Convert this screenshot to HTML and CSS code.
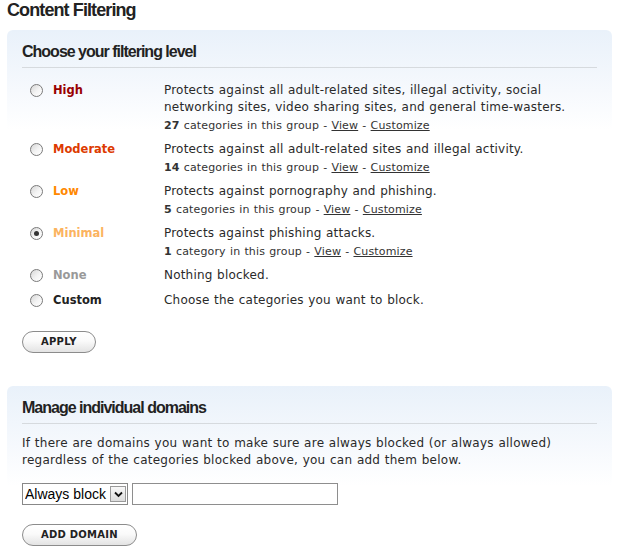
FILE: index.html
```html
<!DOCTYPE html>
<html lang="en">
<head>
<meta charset="utf-8">
<title>Content Filtering</title>
<link rel="stylesheet" href="styles.css">
</head>
<body>
<h1 class="page-title">Content Filtering</h1>

<section class="panel">
  <h2 class="panel-title">Choose your filtering level</h2>
  <ul class="levels">
    <li class="level">
      <input class="radio" type="radio" name="level" id="lv-high">
      <label class="level-name lv-high" for="lv-high">High</label>
      <div class="level-info">
        <p class="desc">Protects against all adult-related sites, illegal activity, social networking sites, video sharing sites, and general time-wasters.</p>
        <p class="meta"><b>27</b> categories in this group - <a href="#">View</a> - <a href="#">Customize</a></p>
      </div>
    </li>
    <li class="level">
      <input class="radio" type="radio" name="level" id="lv-moderate">
      <label class="level-name lv-moderate" for="lv-moderate">Moderate</label>
      <div class="level-info">
        <p class="desc">Protects against all adult-related sites and illegal activity.</p>
        <p class="meta"><b>14</b> categories in this group - <a href="#">View</a> - <a href="#">Customize</a></p>
      </div>
    </li>
    <li class="level">
      <input class="radio" type="radio" name="level" id="lv-low">
      <label class="level-name lv-low" for="lv-low">Low</label>
      <div class="level-info">
        <p class="desc">Protects against pornography and phishing.</p>
        <p class="meta"><b>5</b> categories in this group - <a href="#">View</a> - <a href="#">Customize</a></p>
      </div>
    </li>
    <li class="level">
      <input class="radio" type="radio" name="level" id="lv-minimal" checked>
      <label class="level-name lv-minimal" for="lv-minimal">Minimal</label>
      <div class="level-info">
        <p class="desc">Protects against phishing attacks.</p>
        <p class="meta"><b>1</b> category in this group - <a href="#">View</a> - <a href="#">Customize</a></p>
      </div>
    </li>
    <li class="level">
      <input class="radio" type="radio" name="level" id="lv-none">
      <label class="level-name lv-none" for="lv-none">None</label>
      <div class="level-info">
        <p class="desc">Nothing blocked.</p>
      </div>
    </li>
    <li class="level">
      <input class="radio" type="radio" name="level" id="lv-custom">
      <label class="level-name lv-custom" for="lv-custom">Custom</label>
      <div class="level-info">
        <p class="desc">Choose the categories you want to block.</p>
      </div>
    </li>
  </ul>
  <button class="pill-btn apply-btn" type="button">APPLY</button>
</section>

<section class="panel panel-domains">
  <h2 class="panel-title">Manage individual domains</h2>
  <p class="intro">If there are domains you want to make sure are always blocked (or always allowed) regardless of the categories blocked above, you can add them below.</p>
  <div class="domain-row">
    <div class="select-box">
      <select class="select">
        <option>Always block</option>
        <option>Always allow</option>
      </select>
      <span class="select-arrow"><svg width="9" height="7" viewBox="0 0 9 7"><path d="M1 1.5 L4.5 5 L8 1.5" fill="none" stroke="#111" stroke-width="1.8"/></svg></span>
    </div>
    <input class="domain-input" type="text">
  </div>
  <button class="pill-btn add-btn" type="button">ADD DOMAIN</button>
</section>
</body>
</html>
```

FILE: styles.css
```css
html, body {
  background: #fff;
}
body {
  margin: 0;
  padding: 0 5px 0 7px;
  font-family: "DejaVu Sans", Verdana, sans-serif;
  color: #222;
}

.page-title {
  margin: 0;
  font: bold 18px/20px "Liberation Sans", Arial, sans-serif;
  letter-spacing: -0.9px;
  color: #222;
}

.panel {
  margin-top: 10px;
  padding: 12px 15px 18px;
  border-radius: 6px;
  background: linear-gradient(to bottom, #e9f1fa 0, #f6f9fd 60px, #ffffff 100px);
}
.panel-domains {
  margin-top: 15px;
}

.panel-title {
  margin: 0;
  padding-bottom: 5px;
  border-bottom: 1px solid #d6dade;
  font: bold 16px/20px "Liberation Sans", Arial, sans-serif;
  letter-spacing: -1px;
  color: #222;
}

.levels {
  list-style: none;
  margin: 14px 0 0;
  padding: 0 0 0 8px;
}
.level {
  display: grid;
  grid-template-columns: 23px 111px 1fr;
  margin-bottom: 8px;
}
.level:last-child {
  margin-bottom: 0;
}

.radio {
  appearance: none;
  -webkit-appearance: none;
  box-sizing: border-box;
  width: 13px;
  height: 13px;
  margin: 2px 0 0;
  border: 1px solid #7a7a7a;
  border-radius: 50%;
  background: linear-gradient(135deg, #d6d6d6 0%, #f4f4f4 55%, #ffffff 100%);
  position: relative;
}
.radio:checked::after {
  content: "";
  position: absolute;
  left: 3px;
  top: 3px;
  width: 5px;
  height: 5px;
  border-radius: 50%;
  background: #333;
}

.level-name {
  font-size: 11.5px;
  line-height: 17px;
  font-weight: bold;
  letter-spacing: 0px;
}
.lv-high { color: #990000; }
.lv-moderate { color: #dd3a00; }
.lv-low { color: #ff8800; }
.lv-minimal { color: #fbb35f; }
.lv-none { color: #999999; }
.lv-custom { color: #222222; }

.desc, .intro {
  margin: 0;
  font-size: 12px;
  line-height: 17px;
  letter-spacing: 0.2px;
  word-spacing: 0.5px;
  color: #2a2a2a;
}
.meta {
  margin: 3px 0 1px;
  font-size: 11px;
  line-height: 13px;
  letter-spacing: 0.15px;
  word-spacing: 0.5px;
  color: #333;
}
.meta a {
  color: #333;
  text-decoration: underline;
}

.pill-btn {
  display: block;
  box-sizing: border-box;
  height: 22px;
  padding: 0 18px;
  border: 1px solid #8c8c8c;
  border-radius: 11px;
  background: linear-gradient(to bottom, #ffffff 0%, #fafafa 45%, #e3e3e3 100%);
  font: bold 10px/20px "DejaVu Sans", Verdana, sans-serif;
  letter-spacing: 0.25px;
  color: #222;
  cursor: pointer;
}
.apply-btn {
  margin-top: 22px;
}
.add-btn {
  margin-top: 19px;
}

.intro {
  margin-top: 11px;
  letter-spacing: 0.25px;
}

.domain-row {
  display: flex;
  gap: 4px;
  margin-top: 14px;
}
.select-box {
  display: flex;
  align-items: center;
  box-sizing: border-box;
  width: 106px;
  height: 22px;
  border: 1px solid #888;
  background: #fff;
}
.select {
  appearance: none;
  -webkit-appearance: none;
  flex: 1;
  min-width: 0;
  height: 20px;
  margin: 0;
  padding: 0 0 0 2px;
  border: 0;
  background: transparent;
  font: 14px "Liberation Sans", Arial, sans-serif;
  color: #000;
  outline: none;
}
.select-arrow {
  display: flex;
  align-items: center;
  justify-content: center;
  box-sizing: border-box;
  width: 16px;
  height: 16px;
  margin-right: 1px;
  border: 1px solid #9a9a9a;
  background: linear-gradient(to bottom, #f8f8f8, #dcdcdc);
}
.domain-input {
  box-sizing: border-box;
  width: 206px;
  height: 22px;
  margin: 0;
  padding: 0 3px;
  border: 1px solid #8e8e8e;
  background: #fff;
  font: 14px "Liberation Sans", Arial, sans-serif;
}
```
